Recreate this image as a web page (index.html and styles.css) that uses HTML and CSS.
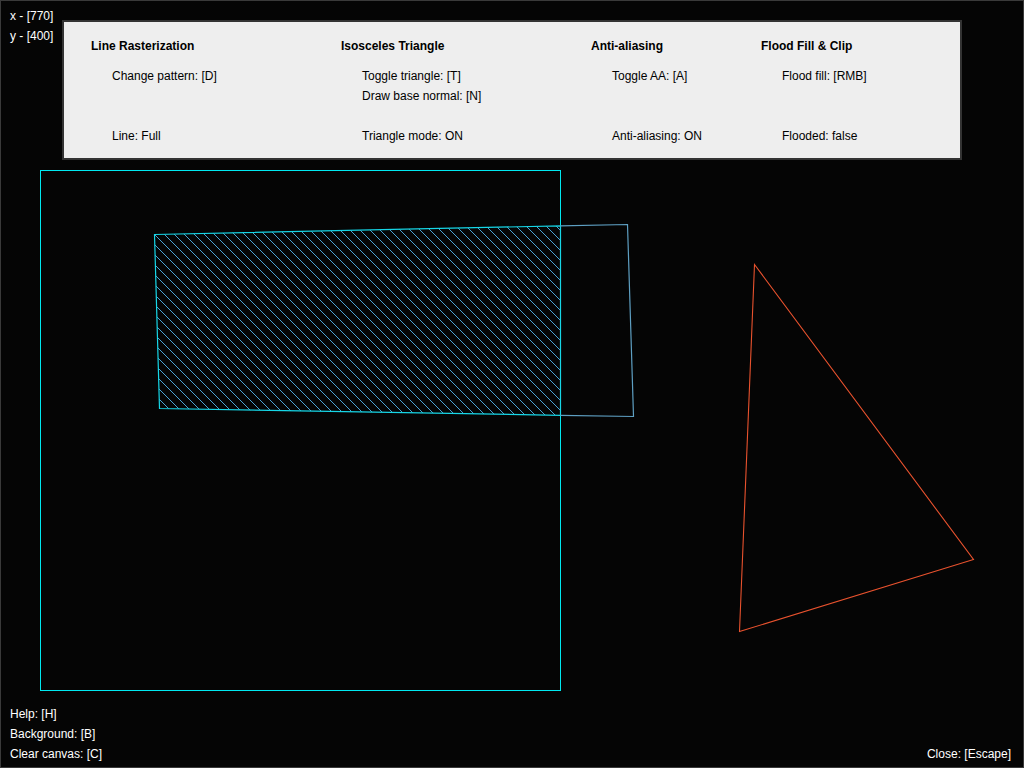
FILE: index.html
```html
<!DOCTYPE html>
<html>
<head>
<meta charset="utf-8">
<link rel="stylesheet" href="styles.css">
</head>
<body>
<div class="screen">
  <svg class="canvas" width="1024" height="768" viewBox="0 0 1024 768">
    <defs>
      <pattern id="hatch" patternUnits="userSpaceOnUse" width="10" height="10">
        <path d="M-1,-1 L11,11 M-6,4 L1,11 M4,-6 L11,1" stroke="#4aa3d3" stroke-width="1"/>
      </pattern>
    </defs>
    <rect x="40.5" y="170.5" width="520" height="520" fill="none" stroke="#00e8f0" stroke-width="1"/>
    <polygon points="154.5,234.5 560.5,225.9 560.5,415.3 159.5,408.5" fill="url(#hatch)" stroke="#16d6e6" stroke-width="1.2"/>
    <polyline points="560.5,225.9 627.5,224.5 633.5,416.5 560.5,415.3" fill="none" stroke="#5e9fc2" stroke-width="1.2"/>
    <polygon points="754.5,264.5 973.5,559.5 739.5,631.5" fill="none" stroke="#e8522e" stroke-width="1.1"/>
  </svg>

  <div class="coords">
    <div>x - [770]</div>
    <div>y - [400]</div>
  </div>

  <div class="panel">
    <div class="col c1">
      <div class="head">Line Rasterization</div>
      <div class="keys"><div>Change pattern: [D]</div></div>
      <div class="status">Line: Full</div>
    </div>
    <div class="col c2">
      <div class="head">Isosceles Triangle</div>
      <div class="keys"><div>Toggle triangle: [T]</div><div>Draw base normal: [N]</div></div>
      <div class="status">Triangle mode: ON</div>
    </div>
    <div class="col c3">
      <div class="head">Anti-aliasing</div>
      <div class="keys"><div>Toggle AA: [A]</div></div>
      <div class="status">Anti-aliasing: ON</div>
    </div>
    <div class="col c4">
      <div class="head">Flood Fill &amp; Clip</div>
      <div class="keys"><div>Flood fill: [RMB]</div></div>
      <div class="status">Flooded: false</div>
    </div>
  </div>

  <div class="help">
    <div>Help: [H]</div>
    <div>Background: [B]</div>
    <div>Clear canvas: [C]</div>
  </div>

  <div class="close">Close: [Escape]</div>
</div>
</body>
</html>
```

FILE: styles.css
```css
html, body {
  margin: 0;
  padding: 0;
  background: #050505;
}

.screen {
  position: relative;
  width: 1024px;
  height: 768px;
  box-sizing: border-box;
  border: 1px solid #3a3a3a;
  background: #050505;
  overflow: hidden;
  font-family: "Liberation Sans", Arial, sans-serif;
  font-size: 12px;
  line-height: 20px;
  color: #ffffff;
}

.canvas {
  position: absolute;
  left: -1px;
  top: -1px;
}

.coords {
  position: absolute;
  left: 9px;
  top: 5px;
}

.panel {
  position: absolute;
  left: 61px;
  top: 19px;
  width: 900px;
  height: 140px;
  box-sizing: border-box;
  border: 2px solid #333333;
  background: #eeeeee;
  color: #000000;
  padding: 14px 0 12px 27px;
  display: grid;
  grid-template-columns: 250px 250px 170px 1fr;
}

.col {
  display: flex;
  flex-direction: column;
}

.head {
  font-weight: bold;
  margin-bottom: 10px;
}

.keys {
  height: 60px;
  padding-left: 21px;
}

.status {
  padding-left: 21px;
}

.help {
  position: absolute;
  left: 9px;
  bottom: 3px;
}

.close {
  position: absolute;
  right: 12px;
  bottom: 3px;
}
```
